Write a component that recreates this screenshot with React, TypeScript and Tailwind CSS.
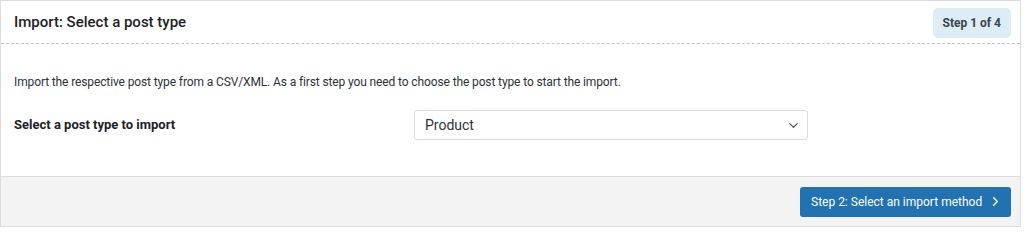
import { ChevronDown, ChevronRight } from 'lucide-react'

export default function App() {
  return (
    <div className="h-[230px] w-[1024px] bg-white font-['Roboto','Noto_Sans',sans-serif] text-[#1d2327]">
      <div className="mr-[3px] flex h-[227px] flex-col border border-[#dcdcde] bg-white">
        {/* header */}
        <div className="flex h-[43px] items-center justify-between border-b border-dashed border-[#c3c4c7] pl-[13px] pr-[9px]">
          <h2 className="text-[15px] font-medium">Import: Select a post type</h2>
          <span className="mt-[2px] rounded-[5px] bg-[#dcedf5] px-[10px] py-[6px] text-[12px] font-bold text-[#3c434a]">
            Step 1 of 4
          </span>
        </div>

        {/* body */}
        <div className="flex-1 px-[13px] pt-[29px]">
          <p className="text-[12px] tracking-[-0.12px] text-[#2c3338]">
            Import the respective post type from a CSV/XML. As a first step you need to choose the post type to start the import.
          </p>
          <div className="mt-[19px] flex items-center">
            <label className="w-[400px] text-[13px] font-bold">Select a post type to import</label>
            <div className="flex h-[30px] w-[394px] items-center justify-between rounded-[3px] border border-[#dcdcde] pl-[10px] pr-[6px]">
              <span className="text-[14px] text-[#2c3338]">Product</span>
              <ChevronDown size={15} strokeWidth={2} className="text-[#50575e]" />
            </div>
          </div>
        </div>

        {/* footer */}
        <div className="flex h-[50px] items-center justify-end border-t border-[#dcdcde] bg-[#f3f3f3] pr-[9px]">
          <button className="flex h-[30px] w-[211px] items-center gap-[6px] whitespace-nowrap rounded-[3px] bg-[#2271b1] pl-[11px] text-[12px] font-normal text-white">
            Step 2: Select an import method
            <ChevronRight size={15} strokeWidth={2.2} />
          </button>
        </div>
      </div>
    </div>
  )
}
